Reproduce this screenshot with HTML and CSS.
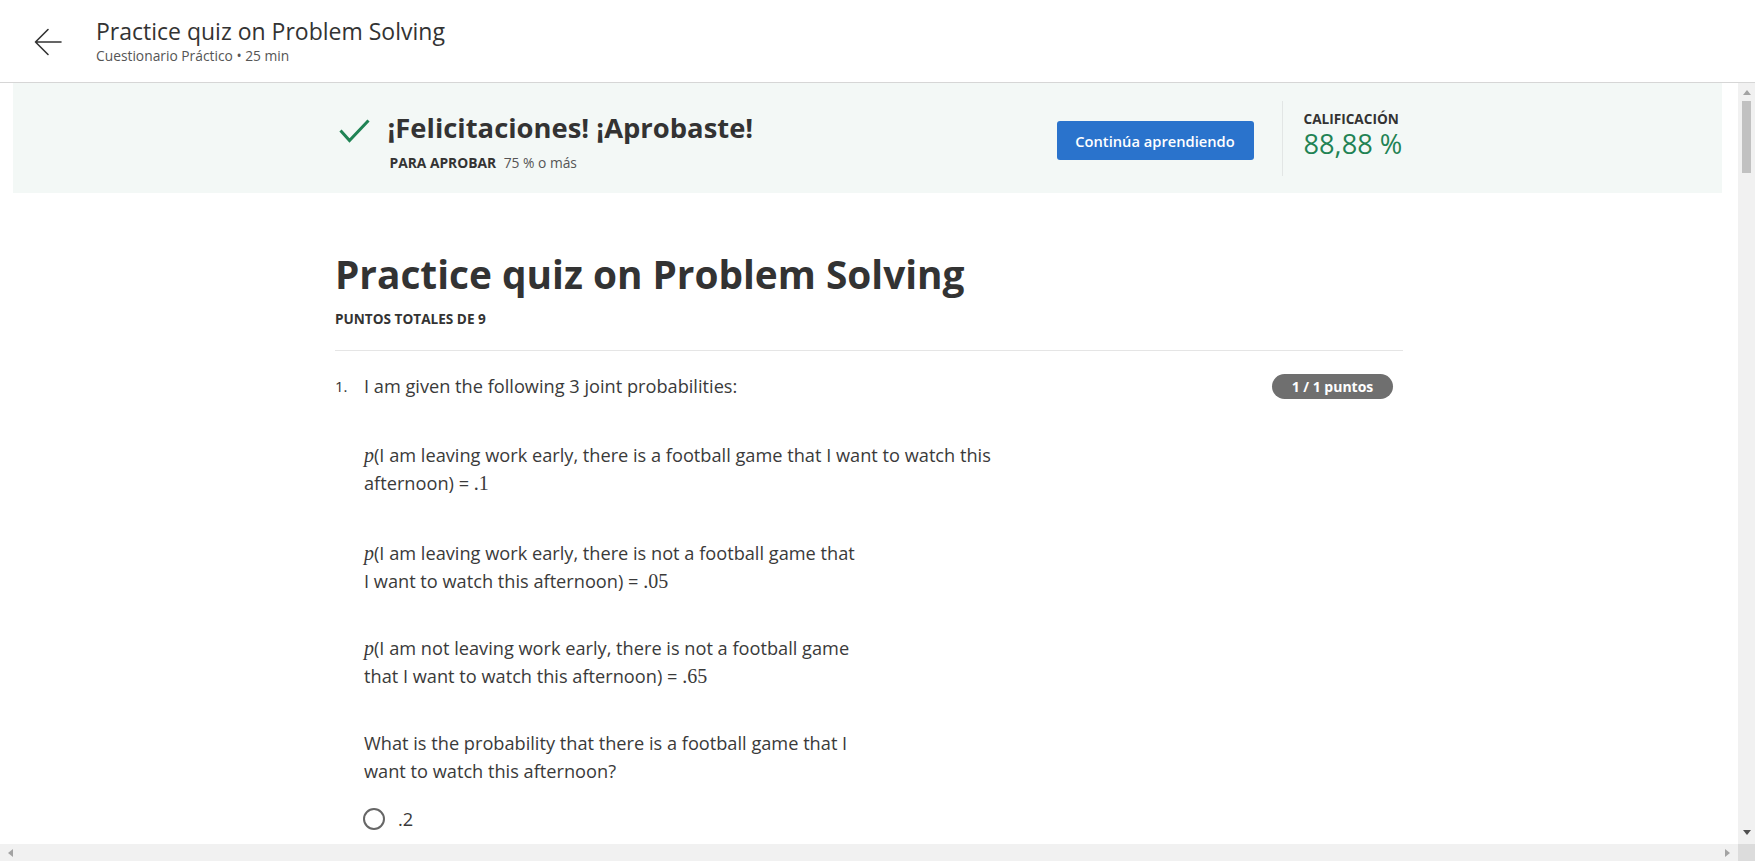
FILE: index.html
```html
<!DOCTYPE html>
<html lang="es">
<head>
<meta charset="utf-8">
<title>Practice quiz on Problem Solving</title>
<link rel="stylesheet" href="styles.css">
</head>
<body>
<header class="topbar">
  <svg class="back-icon" width="28" height="28" viewBox="0 0 28 28" aria-hidden="true">
    <path d="M27 14 H1.5 M14 1.5 L1.5 14 L14 26.5" fill="none" stroke="#333" stroke-width="1.6" stroke-linecap="round" stroke-linejoin="round"/>
  </svg>
  <div class="topbar-text">
    <div class="topbar-title">Practice quiz on Problem Solving</div>
    <div class="topbar-sub">Cuestionario Práctico • 25 min</div>
  </div>
</header>

<div class="middle">
  <div class="viewport">
    <section class="banner">
      <div class="banner-inner">
        <div class="pass">
          <svg class="check" width="31" height="24" viewBox="0 0 31 24" aria-hidden="true">
            <path d="M1.5 11.5 L10.5 21.5 L29.5 1.5" fill="none" stroke="#1f8354" stroke-width="3"/>
          </svg>
          <div class="pass-text">
            <div class="pass-title">¡Felicitaciones! ¡Aprobaste!</div>
            <div class="pass-req"><span class="pass-req-label">PARA APROBAR</span> 75 % o más</div>
          </div>
        </div>
        <button class="btn-primary">Continúa aprendiendo</button>
        <div class="vdivider"></div>
        <div class="grade">
          <div class="grade-label">CALIFICACIÓN</div>
          <div class="grade-value">88,88 %</div>
        </div>
      </div>
    </section>

    <main class="quiz">
      <h1 class="quiz-title">Practice quiz on Problem Solving</h1>
      <div class="quiz-points">PUNTOS TOTALES DE 9</div>
      <hr class="quiz-rule">

      <div class="question">
        <div class="question-head">
          <span class="q-num">1.</span>
          <span class="q-text">I am given the following 3 joint probabilities:</span>
          <span class="badge">1 / 1 puntos</span>
        </div>
        <div class="q-body">
          <p class="q-first"><span class="math-i">p</span>(I am leaving work early, there is a football game that I want to watch this<br>afternoon) = <span class="math">.1</span></p>
          <p><span class="math-i">p</span>(I am leaving work early, there is not a football game that<br>I want to watch this afternoon) = <span class="math">.05</span></p>
          <p><span class="math-i">p</span>(I am not leaving work early, there is not a football game<br>that I want to watch this afternoon) = <span class="math">.65</span></p>
          <p class="q-prompt">What is the probability that there is a football game that I<br>want to watch this afternoon?</p>
          <label class="option"><span class="radio"></span><span class="option-text">.2</span></label>
        </div>
      </div>
    </main>
  </div>
  <div class="vscroll">
    <span class="arrow-up"></span>
    <span class="vthumb"></span>
    <span class="vspace"></span>
    <span class="arrow-down"></span>
  </div>
</div>

<div class="hscroll">
  <div class="htrack">
    <span class="arrow-left"></span>
    <span class="arrow-right"></span>
  </div>
  <div class="corner"></div>
</div>
</body>
</html>
```

FILE: styles.css
```css
* { box-sizing: border-box; }
html, body { height: 100%; }
body {
  margin: 0;
  font-family: "Open Sans", "Noto Sans", sans-serif;
  color: #333;
  background: #fff;
  display: flex;
  flex-direction: column;
  overflow: hidden;
}

/* top bar */
.topbar {
  height: 83px;
  flex: none;
  display: flex;
  align-items: center;
  padding-left: 34px;
  border-bottom: 1px solid #d6d6d6;
}
.back-icon { flex: none; margin-right: 34px; margin-top: 1px; }
.topbar-text { display: flex; flex-direction: column; gap: 1px; margin-top: -1px; }
.topbar-title { font-size: 23px; line-height: 30px; color: #333; }
.topbar-sub { font-size: 13.8px; line-height: 18px; color: #555; }

/* middle area */
.middle { flex: 1; display: flex; min-height: 0; }
.viewport { flex: 1; overflow: hidden; }

/* banner */
.banner {
  height: 110px;
  margin: 0 16px 0 13px;
  background: #f3f8f6;
}
.banner-inner {
  width: 1068px;
  margin: 0 auto;
  height: 100%;
  display: flex;
  align-items: flex-start;
  padding-top: 18px;
}
.pass { flex: 1; display: flex; align-items: flex-start; margin-top: 9px; padding-left: 5px; }
.check { flex: none; margin-top: 9px; margin-right: 18px; }
.pass-text { display: flex; flex-direction: column; gap: 8px; }
.pass-title { font-size: 27.4px; line-height: 36px; font-weight: 700; color: #333; }
.pass-req { font-size: 13.8px; line-height: 18px; color: #555; padding-left: 2px; }
.pass-req-label { font-weight: 700; color: #333; margin-right: 4px; }

.btn-primary {
  flex: none;
  margin-top: 20px;
  width: 197px;
  height: 39px;
  border: none;
  border-radius: 3px;
  background: #2a73cc;
  color: #fff;
  font-family: inherit;
  font-size: 14.7px;
  font-weight: 600;
}
.vdivider { flex: none; width: 1px; height: 75px; background: #e2e6e5; margin: 0 21px 0 28px; }
.grade { flex: none; width: 98px; margin-top: 10px; white-space: nowrap; }
.grade-label { font-size: 13.6px; line-height: 16px; font-weight: 700; color: #333; }
.grade-value { font-size: 27.2px; line-height: 34px; color: #1f8354; }

/* quiz */
.quiz { width: 1068px; margin: 0 auto; padding-top: 55px; }
.quiz-title { margin: 0; font-size: 38.8px; line-height: 52px; font-weight: 700; color: #333; }
.quiz-points { margin-top: 11px; font-size: 13.6px; line-height: 16px; font-weight: 700; color: #333; }
.quiz-rule { margin: 23px 0 0; border: none; height: 1px; background: #e5e5e5; }

.question { margin-top: 22px; }
.question-head { display: flex; align-items: center; padding-right: 10px; }
.q-num { width: 29px; flex: none; font-size: 15px; line-height: 27px; color: #333; }
.q-text { flex: 1; font-size: 18.2px; line-height: 27px; color: #3a3a3a; }
.badge {
  flex: none;
  height: 25px;
  width: 121px;
  border-radius: 13px;
  background: #6f6f6f;
  color: #fff;
  font-size: 14px;
  font-weight: 700;
  line-height: 25px;
  text-align: center;
}
.q-body { padding-left: 29px; padding-top: 41px; }
.q-body p { margin: 0 0 39px; font-size: 18.2px; line-height: 28px; color: #3a3a3a; }
.q-body p.q-first { margin-bottom: 42px; }
.q-body p.q-prompt { margin-bottom: 20px; }
.math-i { font-family: "Liberation Serif", "DejaVu Serif", serif; font-style: italic; font-size: 20px; }
.math { font-family: "Liberation Serif", "DejaVu Serif", serif; font-size: 20px; }
.option { display: flex; align-items: center; gap: 13px; margin-left: -1px; height: 28px; }
.radio { width: 22px; height: 22px; border: 2px solid #666; border-radius: 50%; flex: none; }
.option-text { font-size: 18.2px; line-height: 28px; color: #3a3a3a; }

/* fake scrollbars */
.vscroll {
  flex: none;
  width: 17px;
  background: #f1f1f1;
  display: flex;
  flex-direction: column;
  align-items: center;
}
.arrow-up {
  margin-top: 7px;
  width: 0; height: 0;
  border-left: 4px solid transparent;
  border-right: 4px solid transparent;
  border-bottom: 5px solid #a3a3a3;
}
.vthumb { margin-top: 6px; width: 9px; height: 72px; background: #c1c1c1; }
.vspace { flex: 1; }
.arrow-down {
  margin-bottom: 9px;
  width: 0; height: 0;
  border-left: 4px solid transparent;
  border-right: 4px solid transparent;
  border-top: 5px solid #505050;
}
.hscroll { flex: none; height: 17px; display: flex; }
.htrack {
  flex: 1;
  background: #f1f1f1;
  display: flex;
  align-items: center;
  justify-content: space-between;
  padding: 0 8px;
}
.arrow-left {
  width: 0; height: 0;
  border-top: 4px solid transparent;
  border-bottom: 4px solid transparent;
  border-right: 5px solid #a3a3a3;
}
.arrow-right {
  width: 0; height: 0;
  border-top: 4px solid transparent;
  border-bottom: 4px solid transparent;
  border-left: 5px solid #a3a3a3;
}
.corner { width: 17px; background: #dcdcdc; }
```
